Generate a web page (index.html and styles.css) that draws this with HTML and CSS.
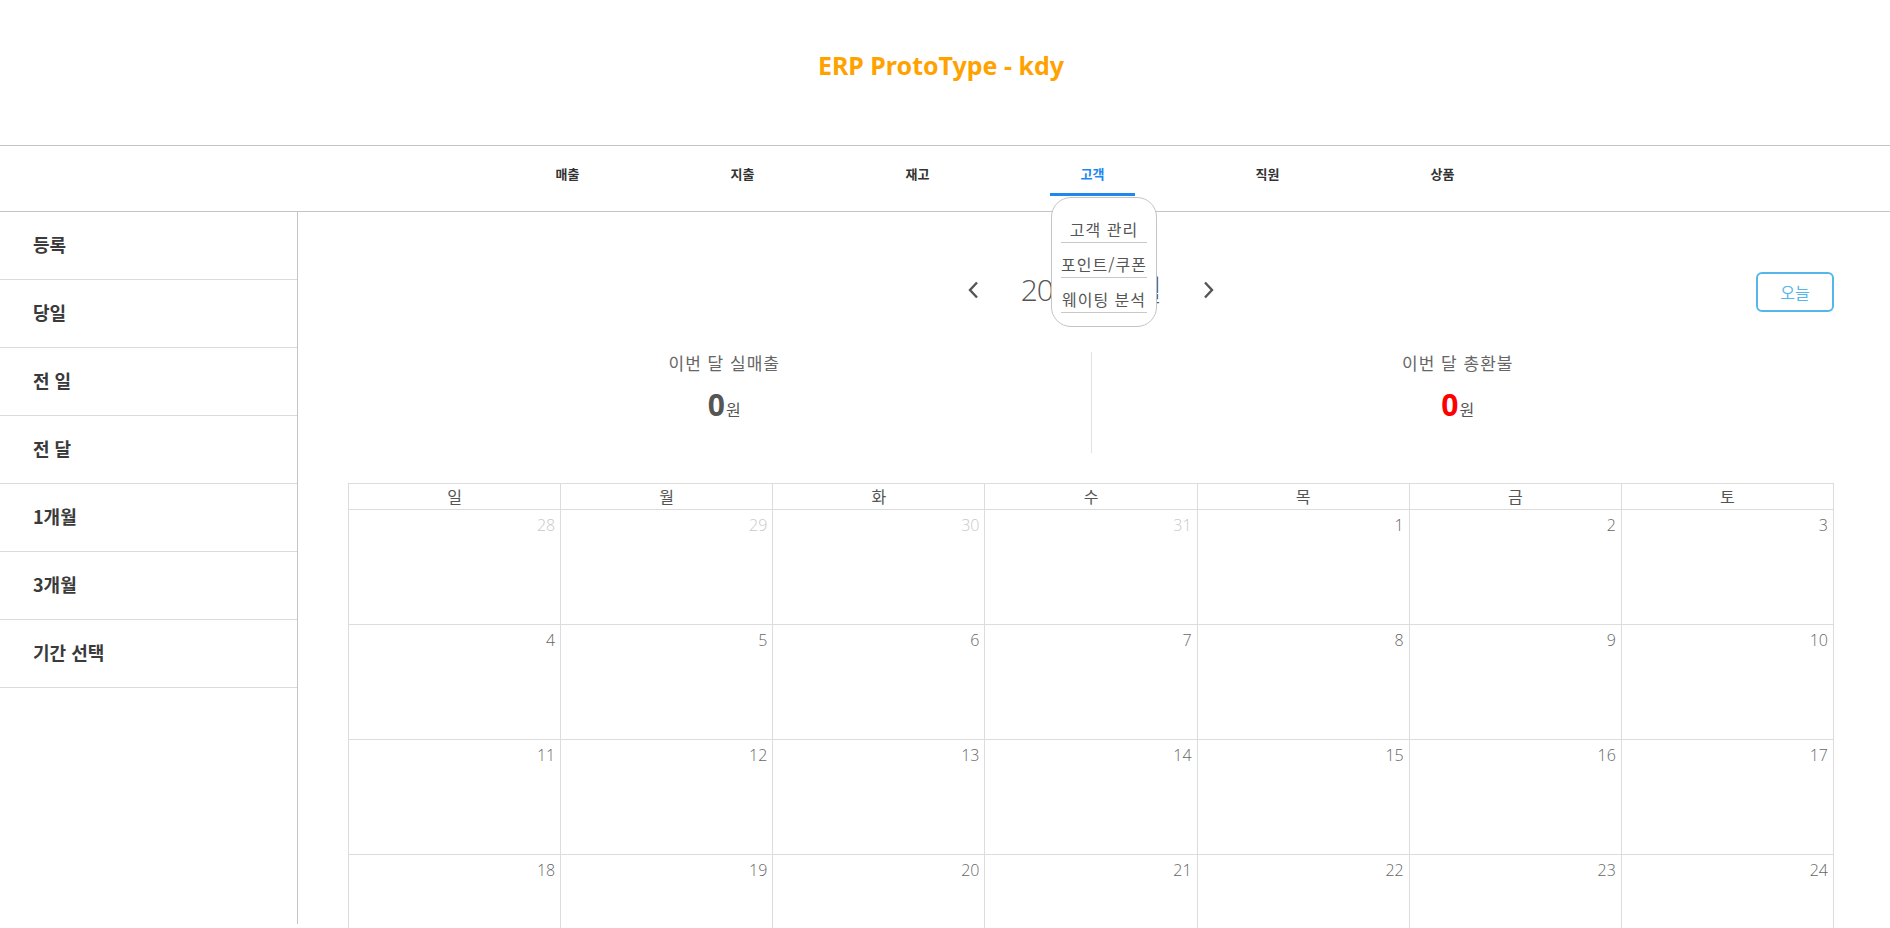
FILE: index.html
```html
<!DOCTYPE html>
<html lang="ko">
<head>
<meta charset="utf-8">
<title>ERP ProtoType - kdy</title>
<link rel="stylesheet" href="styles.css">
</head>
<body>
<header class="top">
  <h1 class="brand">ERP ProtoType - kdy</h1>
</header>
<nav class="gnb">
  <ul class="gnb-list">
    <li class="gnb-item">매출</li>
    <li class="gnb-item">지출</li>
    <li class="gnb-item">재고</li>
    <li class="gnb-item active">고객
      <ul class="dropdown">
        <li class="dropdown-item">고객 관리</li>
        <li class="dropdown-item">포인트/쿠폰</li>
        <li class="dropdown-item">웨이팅 분석</li>
      </ul>
    </li>
    <li class="gnb-item">직원</li>
    <li class="gnb-item">상품</li>
  </ul>
</nav>
<div class="layout">
  <aside class="side">
    <ul class="side-list">
      <li class="side-item">등록</li>
      <li class="side-item">당일</li>
      <li class="side-item">전 일</li>
      <li class="side-item">전 달</li>
      <li class="side-item">1개월</li>
      <li class="side-item">3개월</li>
      <li class="side-item">기간 선택</li>
    </ul>
  </aside>
  <main class="content">
    <div class="month-bar">
      <div class="month-nav">
        <svg class="chev" width="12" height="18" viewBox="0 0 12 18"><path d="M10 1.5 L3 9 L10 16.5" fill="none" stroke="#555" stroke-width="2.4"/></svg>
        <span class="month-title">2023년 6월</span>
        <svg class="chev" width="12" height="18" viewBox="0 0 12 18"><path d="M2 1.5 L9 9 L2 16.5" fill="none" stroke="#555" stroke-width="2.4"/></svg>
      </div>
      <button class="today">오늘</button>
    </div>
    <div class="summary">
      <div class="sum-col">
        <div class="sum-label">이번 달 실매출</div>
        <div class="sum-value"><span class="num">0</span><span class="won">원</span></div>
      </div>
      <div class="sum-col divided">
        <div class="sum-label">이번 달 총환불</div>
        <div class="sum-value"><span class="num red">0</span><span class="won">원</span></div>
      </div>
    </div>
    <div class="cal">
      <div class="cal-head">일</div><div class="cal-head">월</div><div class="cal-head">화</div><div class="cal-head">수</div><div class="cal-head">목</div><div class="cal-head">금</div><div class="cal-head">토</div>
      <div class="cal-day other">28</div><div class="cal-day other">29</div><div class="cal-day other">30</div><div class="cal-day other">31</div><div class="cal-day">1</div><div class="cal-day">2</div><div class="cal-day">3</div>
      <div class="cal-day">4</div><div class="cal-day">5</div><div class="cal-day">6</div><div class="cal-day">7</div><div class="cal-day">8</div><div class="cal-day">9</div><div class="cal-day">10</div>
      <div class="cal-day">11</div><div class="cal-day">12</div><div class="cal-day">13</div><div class="cal-day">14</div><div class="cal-day">15</div><div class="cal-day">16</div><div class="cal-day">17</div>
      <div class="cal-day">18</div><div class="cal-day">19</div><div class="cal-day">20</div><div class="cal-day">21</div><div class="cal-day">22</div><div class="cal-day">23</div><div class="cal-day">24</div>
    </div>
  </main>
</div>
</body>
</html>
```
FILE: styles.css
```css
* { box-sizing: border-box; }
html, body { margin: 0; padding: 0; }
body {
  font-family: "Noto Sans CJK KR", "Noto Sans", sans-serif;
  color: #333;
  background: #fff;
  overflow: hidden;
}
ul { list-style: none; margin: 0; padding: 0; }

.top {
  height: 145px;
  padding-top: 48px;
  text-align: center;
}
.brand {
  margin: 0;
  font-family: "Noto Sans", sans-serif;
  font-size: 25px;
  line-height: 34px;
  font-weight: 700;
  color: #ffa200;
  padding-right: 8px;
}

.gnb {
  border-top: 1px solid #c4c4c4;
  border-bottom: 1px solid #c4c4c4;
  height: 67px;
  padding-bottom: 15px;
}
.gnb-list {
  display: flex;
  gap: 90px;
  padding-left: 525px;
}
.gnb-item {
  position: relative;
  width: 85px;
  height: 50px;
  padding-top: 18px;
  line-height: 20px;
  text-align: center;
  font-size: 13px;
  font-weight: 700;
  color: #333;
  border-bottom: 3px solid transparent;
}
.gnb-item.active {
  color: #1e87f0;
  border-bottom-color: #1e87f0;
}
.dropdown {
  position: absolute;
  left: 1px;
  top: calc(100% + 4px);
  width: 106px;
  height: 130px;
  padding: 12px 9px 0;
  background: #fff;
  border: 1px solid #c4c4c4;
  border-radius: 20px;
  z-index: 10;
}
.dropdown-item {
  padding-top: 11px;
  padding-bottom: 3px;
  line-height: 20px;
  font-size: 16px;
  letter-spacing: 1px;
  font-weight: 400;
  color: #555;
  white-space: nowrap;
  text-align: center;
  border-bottom: 1px solid #c8c8c8;
}
.dropdown-item:first-child { padding-top: 9px; }

.layout {
  display: flex;
}
.side {
  width: 298px;
  height: 712px;
  flex: none;
  border-right: 1px solid #c4c4c4;
}
.side-item {
  height: 68px;
  padding-left: 33px;
  padding-bottom: 4px;
  display: flex;
  align-items: center;
  border-bottom: 1px solid #dadada;
  font-size: 18px;
  font-weight: 700;
  color: #3a3a3a;
}

.content {
  flex: 1;
  padding-left: 50px;
}
.month-bar {
  width: 1486px;
  margin-top: 60px;
  height: 40px;
  display: grid;
  grid-template-columns: 1fr auto 1fr;
  align-items: center;
}
.month-nav {
  grid-column: 2;
  display: flex;
  align-items: center;
  gap: 42px;
  margin-top: -5px;
}
.chev { display: block; }
.month-title {
  font-family: "Open Sans", "Noto Sans CJK KR", sans-serif;
  font-size: 30px;
  font-weight: 300;
  line-height: 40px;
  letter-spacing: -1px;
  color: #555;
}
.today {
  grid-column: 3;
  justify-self: end;
  width: 78px;
  height: 40px;
  background: #fff;
  border: 2px solid #56b6ea;
  border-radius: 6px;
  color: #56b6ea;
  font-family: "Noto Sans CJK KR", sans-serif;
  font-size: 16px;
  padding: 0;
}

.summary {
  width: 1466px;
  margin: 40px 0 0 10px;
  display: flex;
}
.sum-col {
  flex: 1;
  height: 101px;
  text-align: center;
}
.sum-col.divided { border-left: 1px solid #e2e2e2; }
.sum-label {
  font-size: 17px;
  letter-spacing: 1px;
  line-height: 22px;
  color: #666;
}
.sum-value {
  margin-top: 11px;
  line-height: 40px;
}
.num {
  font-family: "Noto Sans", sans-serif;
  font-size: 30px;
  font-weight: 700;
  color: #555;
}
.num.red { color: #ff0000; }
.won {
  font-size: 16px;
  color: #555;
  margin-left: 1px;
}

.cal {
  width: 1486px;
  margin-top: 30px;
  display: grid;
  grid-template-columns: repeat(7, 1fr);
  border-top: 1px solid #dcdcdc;
  border-left: 1px solid #dcdcdc;
}
.cal-head {
  height: 26px;
  line-height: 25px;
  text-align: center;
  font-size: 16px;
  color: #555;
  border-right: 1px solid #dcdcdc;
  border-bottom: 1px solid #dcdcdc;
}
.cal-day {
  height: 115px;
  padding: 4px 5px 0 0;
  text-align: right;
  font-family: "Open Sans", sans-serif;
  font-size: 16px;
  font-weight: 300;
  line-height: 22px;
  color: #666;
  border-right: 1px solid #dcdcdc;
  border-bottom: 1px solid #dcdcdc;
}
.cal-day.other { color: #c8c8c8; }
```
